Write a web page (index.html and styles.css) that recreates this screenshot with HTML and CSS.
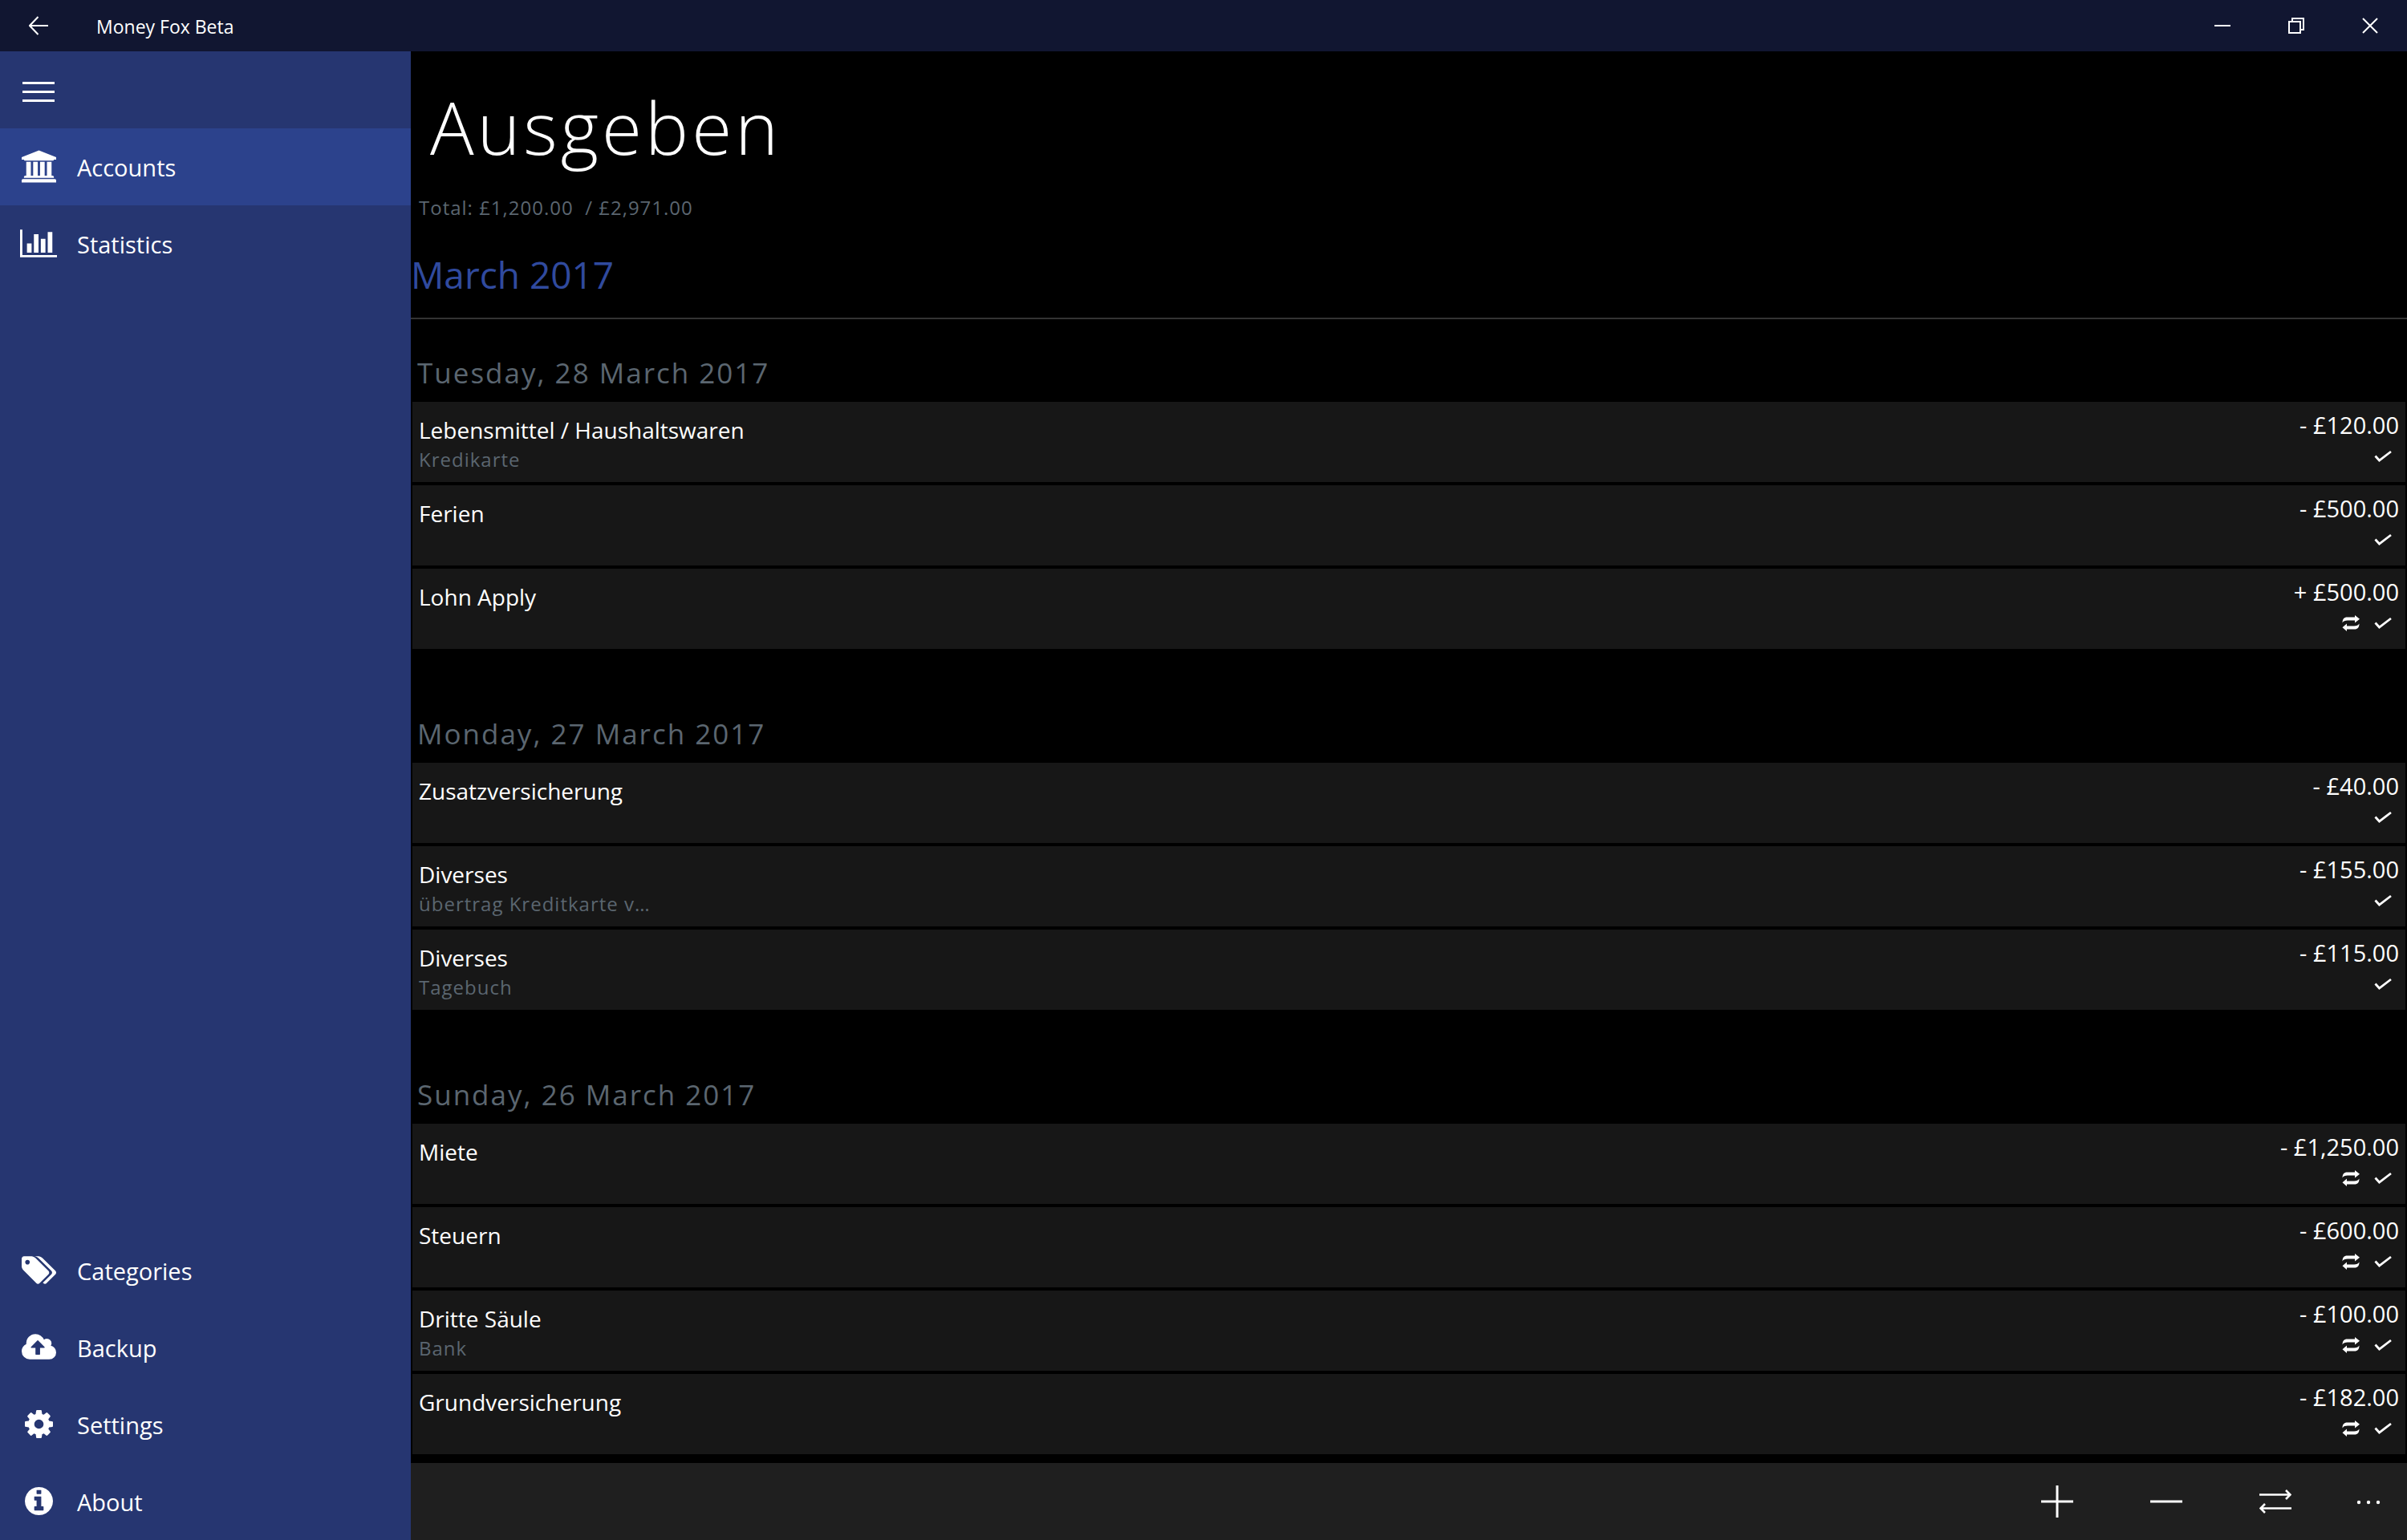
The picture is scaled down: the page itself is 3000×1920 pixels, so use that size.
FILE: index.html
```html
<!DOCTYPE html>
<html lang="en">
<head>
<meta charset="utf-8">
<meta name="viewport" content="width=device-width, initial-scale=1">
<title>Money Fox Beta</title>
<link rel="stylesheet" href="styles.css">
</head>
<body>
<svg class="sprite" aria-hidden="true">
  <symbol id="check" viewBox="0 0 24 24"><path d="M2.5 11.5L7.5 17L22 6" fill="none" stroke="currentColor" stroke-width="2.8"/></symbol>
  <symbol id="repeat" viewBox="0 0 24 24"><g fill="currentColor"><path d="M1.5 11.5C1.5 7 3.500 4.500 7.500 4.500H17V2L23 6.800L17 11.500V8.600H8C5 8.600 2.500 9.500 1.500 11.500Z"/><path d="M22.500 12.500C22.500 17 20.500 19.500 16.500 19.500H7V22L1.500 17.200L7 12.500V15.400H16C19 15.400 21.500 14.500 22.500 12.500Z"/></g></symbol>
</svg>
<div class="app">
  <header class="titlebar">
    <button class="back" aria-label="Back"><svg width="24" height="24" viewBox="0 0 24 24"><path d="M24 12H1M11.500 1L1 12L11.500 23" fill="none" stroke="currentColor" stroke-width="2"/></svg></button>
    <span class="app-name">Money Fox Beta</span>
    <button class="window-button" aria-label="Minimize"><svg width="20" height="20" viewBox="0 0 20 20"><path d="M0 10H20" stroke="currentColor" stroke-width="2"/></svg></button>
    <button class="window-button" aria-label="Restore"><svg width="20" height="20" viewBox="0 0 20 20"><path d="M1 5H15V19H1ZM5 5V1H19V15H15" fill="none" stroke="currentColor" stroke-width="2"/></svg></button>
    <button class="window-button" aria-label="Close"><svg width="20" height="20" viewBox="0 0 20 20"><path d="M1 1L19 19M19 1L1 19" stroke="currentColor" stroke-width="2"/></svg></button>
  </header>
  <nav class="sidebar">
    <button class="menu" aria-label="Menu"><svg width="40" height="30" viewBox="0 0 40 30"><path d="M0 6.500H40M0 17.500H40M0 28.500H40" stroke="currentColor" stroke-width="3"/></svg></button>
    <a class="nav-item active" href="#accounts"><svg width="43" height="41" viewBox="0 128 1920 1792"><path d="M960 128l960 384v128h-128q0 26-20.500 45t-48.500 19h-1526q-28 0-48.500-19t-20.500-45h-128v-128zM256 768h256v768h128v-768h256v768h128v-768h256v768h128v-768h256v768h59q28 0 48.500 19t20.500 45v64h-1664v-64q0-26 20.500-45t48.500-19h59v-768zM1851 1728q28 0 48.500 19t20.500 45v128h-1920v-128q0-26 20.500-45t48.500-19h1782z"/></svg>Accounts</a>
    <a class="nav-item" href="#statistics"><svg width="46" height="35" viewBox="0 128 2048 1536"><path d="M640 896v512h-256v-512h256zm384-512v1024h-256v-1024h256zm1024 1152v128h-2048v-1536h128v1408h1920zm-640-896v768h-256v-768h256zm384-384v1152h-256v-1152h256z"/></svg>Statistics</a>
    <a class="nav-item first-bottom" href="#categories"><svg width="43" height="35" viewBox="-64 128 1899 1515"><path d="M384 448q0-53-37.500-90.500t-90.500-37.500-90.500 37.500-37.500 90.500 37.500 90.500 90.500 37.500 90.500-37.500 37.500-90.500zm1067 576q0 53-37 90l-491 492q-39 37-91 37-53 0-90-37l-715-716q-38-37-64.500-101t-26.500-117v-416q0-52 38-90t90-38h416q53 0 117 26.500t102 64.500l715 714q37 39 37 91zm384 0q0 53-37 90l-491 492q-39 37-91 37-36 0-59-14t-53-45l470-470q37-37 37-90 0-52-37-91l-715-714q-38-38-102-64.500t-117-26.500h224q53 0 117 26.500t102 64.500l715 714q37 39 37 91z"/></svg>Categories</a>
    <a class="nav-item" href="#backup"><svg width="43" height="32" viewBox="0 128 1920 1408"><path d="M1280 864q0-14-9-23l-352-352q-9-9-23-9t-23 9l-351 351q-10 12-10 24 0 14 9 23t23 9h224v352q0 13 9.500 22.500t22.500 9.500h192q13 0 22.500-9.500t9.500-22.500v-352h224q13 0 22.500-9.500t9.500-22.500zm640 288q0 159-112.500 271.500t-271.500 112.500h-1088q-185 0-316.500-131.500t-131.500-316.500q0-130 70-240t188-165q-2-30-2-43 0-212 150-362t362-150q156 0 285.500 87t188.500 231q71-62 166-62 106 0 181 75t75 181q0 76-41 138 130 31 213.500 135.500t83.500 238.500z"/></svg>Backup</a>
    <a class="nav-item" href="#settings"><svg width="35" height="35" viewBox="0 256 1536 1536"><path d="M1024 1024q0-106-75-181t-181-75-181 75-75 181 75 181 181 75 181-75 75-181zm512-109v222q0 12-8 23t-20 13l-185 28q-19 54-39 91 35 50 107 138 10 12 10 25t-9 23q-27 37-99 108t-94 71q-12 0-26-9l-138-108q-44 23-91 38-16 136-29 186-7 28-36 28h-222q-14 0-24.500-8.500t-11.500-21.500l-28-184q-49-16-90-37l-141 107q-10 9-25 9-14 0-25-11-126-114-165-168-7-10-7-23 0-12 8-23 15-21 51-66.500t54-70.500q-27-50-41-99l-183-27q-13-2-21-12.500t-8-23.500v-222q0-12 8-23t19-13l186-28q14-46 39-92-40-57-107-138-10-12-10-24 0-10 9-23 26-36 98.500-107.500t94.500-71.500q13 0 26 10l138 107q44-23 91-38 16-136 29-186 7-28 36-28h222q14 0 24.500 8.500t11.500 21.500l28 184q49 16 90 37l142-107q9-9 24-9 13 0 25 10 129 119 165 170 7 8 7 22 0 12-8 23-15 21-51 66.500t-54 70.500q26 50 41 98l183 28q13 2 21 12.500t8 23.500z"/></svg>Settings</a>
    <a class="nav-item" href="#about"><svg width="35" height="35" viewBox="0 128 1536 1536"><path d="M1024 1376v-160q0-14-9-23t-23-9h-96v-512q0-14-9-23t-23-9h-320q-14 0-23 9t-9 23v160q0 14 9 23t23 9h96v320h-96q-14 0-23 9t-9 23v160q0 14 9 23t23 9h448q14 0 23-9t9-23zm-128-896v-160q0-14-9-23t-23-9h-192q-14 0-23 9t-9 23v160q0 14 9 23t23 9h192q14 0 23-9t9-23zm640 416q0 209-103 385.500t-279.500 279.500-385.500 103-385.500-103-279.500-279.500-103-385.500 103-385.500 279.500-279.500 385.500-103 385.500 103 279.500 279.500 103 385.500z"/></svg>About</a>
  </nav>
  <main class="content">
    <h1 class="title">Ausgeben</h1>
    <p class="total">Total: £1,200.00&nbsp; / £2,971.00</p>
    <h2 class="month">March 2017</h2>
    <div class="days">
      <section class="day">
        <h3 class="date">Tuesday, 28 March 2017</h3>
        <ul class="payments">
          <li class="payment"><div class="what"><span class="name">Lebensmittel / Haushaltswaren</span><span class="note">Kredikarte</span></div><div class="sum"><span class="amount">- £120.00</span><span class="flags"><svg><use href="#check"/></svg></span></div></li>
          <li class="payment"><div class="what"><span class="name">Ferien</span></div><div class="sum"><span class="amount">- £500.00</span><span class="flags"><svg><use href="#check"/></svg></span></div></li>
          <li class="payment"><div class="what"><span class="name">Lohn Apply</span></div><div class="sum"><span class="amount">+ £500.00</span><span class="flags"><svg><use href="#repeat"/></svg><svg><use href="#check"/></svg></span></div></li>
        </ul>
      </section>
      <section class="day">
        <h3 class="date">Monday, 27 March 2017</h3>
        <ul class="payments">
          <li class="payment"><div class="what"><span class="name">Zusatzversicherung</span></div><div class="sum"><span class="amount">- £40.00</span><span class="flags"><svg><use href="#check"/></svg></span></div></li>
          <li class="payment"><div class="what"><span class="name">Diverses</span><span class="note">übertrag Kreditkarte v…</span></div><div class="sum"><span class="amount">- £155.00</span><span class="flags"><svg><use href="#check"/></svg></span></div></li>
          <li class="payment"><div class="what"><span class="name">Diverses</span><span class="note">Tagebuch</span></div><div class="sum"><span class="amount">- £115.00</span><span class="flags"><svg><use href="#check"/></svg></span></div></li>
        </ul>
      </section>
      <section class="day">
        <h3 class="date">Sunday, 26 March 2017</h3>
        <ul class="payments">
          <li class="payment"><div class="what"><span class="name">Miete</span></div><div class="sum"><span class="amount">- £1,250.00</span><span class="flags"><svg><use href="#repeat"/></svg><svg><use href="#check"/></svg></span></div></li>
          <li class="payment"><div class="what"><span class="name">Steuern</span></div><div class="sum"><span class="amount">- £600.00</span><span class="flags"><svg><use href="#repeat"/></svg><svg><use href="#check"/></svg></span></div></li>
          <li class="payment"><div class="what"><span class="name">Dritte Säule</span><span class="note">Bank</span></div><div class="sum"><span class="amount">- £100.00</span><span class="flags"><svg><use href="#repeat"/></svg><svg><use href="#check"/></svg></span></div></li>
          <li class="payment"><div class="what"><span class="name">Grundversicherung</span></div><div class="sum"><span class="amount">- £182.00</span><span class="flags"><svg><use href="#repeat"/></svg><svg><use href="#check"/></svg></span></div></li>
        </ul>
      </section>
    </div>
  </main>
  <footer class="commands">
    <button class="command" aria-label="Add income"><svg width="40" height="40" viewBox="0 0 40 40"><path d="M0 20H40M20 0V40" stroke="currentColor" stroke-width="3"/></svg></button>
    <button class="command" aria-label="Add expense"><svg width="40" height="40" viewBox="0 0 40 40"><path d="M0 20H40" stroke="currentColor" stroke-width="3"/></svg></button>
    <button class="command" aria-label="Add transfer"><svg width="40" height="40" viewBox="0 0 40 40"><path d="M0 11.500H38.500M33 6L38.500 11.500L33 17M40 28.500H1.500M7 23L1.500 28.500L7 34" fill="none" stroke="currentColor" stroke-width="2.600"/></svg></button>
    <button class="command more" aria-label="More"><svg width="40" height="40" viewBox="0 0 40 40" fill="currentColor"><circle cx="8" cy="21" r="2.200"/><circle cx="20" cy="21" r="2.200"/><circle cx="32" cy="21" r="2.200"/></svg></button>
  </footer>
</div>
</body>
</html>
```
FILE: styles.css
```css
* { box-sizing: border-box; }

body {
  margin: 0;
  background: #000;
  color: #fff;
  font-family: "Open Sans", "Noto Sans", sans-serif;
  font-size: 29px;
  line-height: 40px;
}

h1, h2, h3, p, ul { margin: 0; padding: 0; font-weight: 400; }
ul { list-style: none; }
svg { display: block; fill: currentColor; }
button {
  border: 0;
  padding: 0;
  background: none;
  color: inherit;
  font: inherit;
  display: flex;
  align-items: center;
  justify-content: center;
}
.sprite { position: absolute; width: 0; height: 0; }

.app {
  height: 100vh;
  display: grid;
  grid-template-columns: 512px 1fr;
  grid-template-rows: 64px 1fr 96px;
}

/* Title bar */
.titlebar {
  grid-column: 1 / -1;
  display: flex;
  background: #111631;
}
.back { width: 96px; }
.app-name {
  flex: 1;
  padding: 2px 0 0 24px;
  font-size: 23px;
  line-height: 62px;
}
.window-button { width: 92px; }

/* Navigation */
.sidebar {
  grid-row: 2 / 4;
  display: flex;
  flex-direction: column;
  background: #263671;
}
.menu { width: 96px; height: 96px; }
.nav-item {
  display: grid;
  grid-template-columns: 96px 1fr;
  align-items: end;
  min-height: 96px;
  line-height: 94px;
  color: inherit;
  text-decoration: none;
}
.nav-item svg {
  align-self: center;
  justify-self: center;
  margin-bottom: 2px;
}
.nav-item.active { background: #2c428c; }
.first-bottom { margin-top: auto; }

/* Payments */
.content { overflow: auto; padding-top: 34px; }
.title {
  padding-left: 24px;
  font-size: 91px;
  font-weight: 300;
  line-height: 120px;
  letter-spacing: 4px;
}
.total {
  margin-top: 25px;
  padding-left: 10px;
  font-size: 24px;
  line-height: 32px;
  letter-spacing: 1px;
  color: #5b6670;
}
.month {
  margin-top: 35px;
  padding-bottom: 22px;
  border-bottom: 2px solid #333;
  font-size: 46px;
  line-height: 64px;
  color: #304a9e;
}
.days {
  display: flex;
  flex-direction: column;
  gap: 39px;
}
.day { padding: 43px 2px 0; }
.date {
  padding-left: 6px;
  margin-bottom: 12px;
  font-size: 35px;
  line-height: 48px;
  letter-spacing: 2px;
  color: #5b6670;
}
.payments {
  display: flex;
  flex-direction: column;
  gap: 4px;
}
.payment {
  display: flex;
  justify-content: space-between;
  min-height: 100px;
  padding: 9px 8px 0;
  background: #171717;
}
.what {
  display: flex;
  flex-direction: column;
  gap: 1px;
  padding-top: 6px;
}
.name { font-size: 28px; }
.note {
  font-size: 24px;
  line-height: 32px;
  letter-spacing: 1px;
  color: #5b6670;
}
.sum {
  display: flex;
  flex-direction: column;
  align-items: flex-end;
  gap: 7px;
}
.flags {
  display: flex;
  gap: 16px;
  padding-right: 8px;
}
.flags svg { width: 24px; height: 24px; }

/* Command bar */
.commands {
  display: flex;
  justify-content: flex-end;
  background: #1f1f1f;
}
.command { width: 136px; }
.command.more { width: 96px; }
```
